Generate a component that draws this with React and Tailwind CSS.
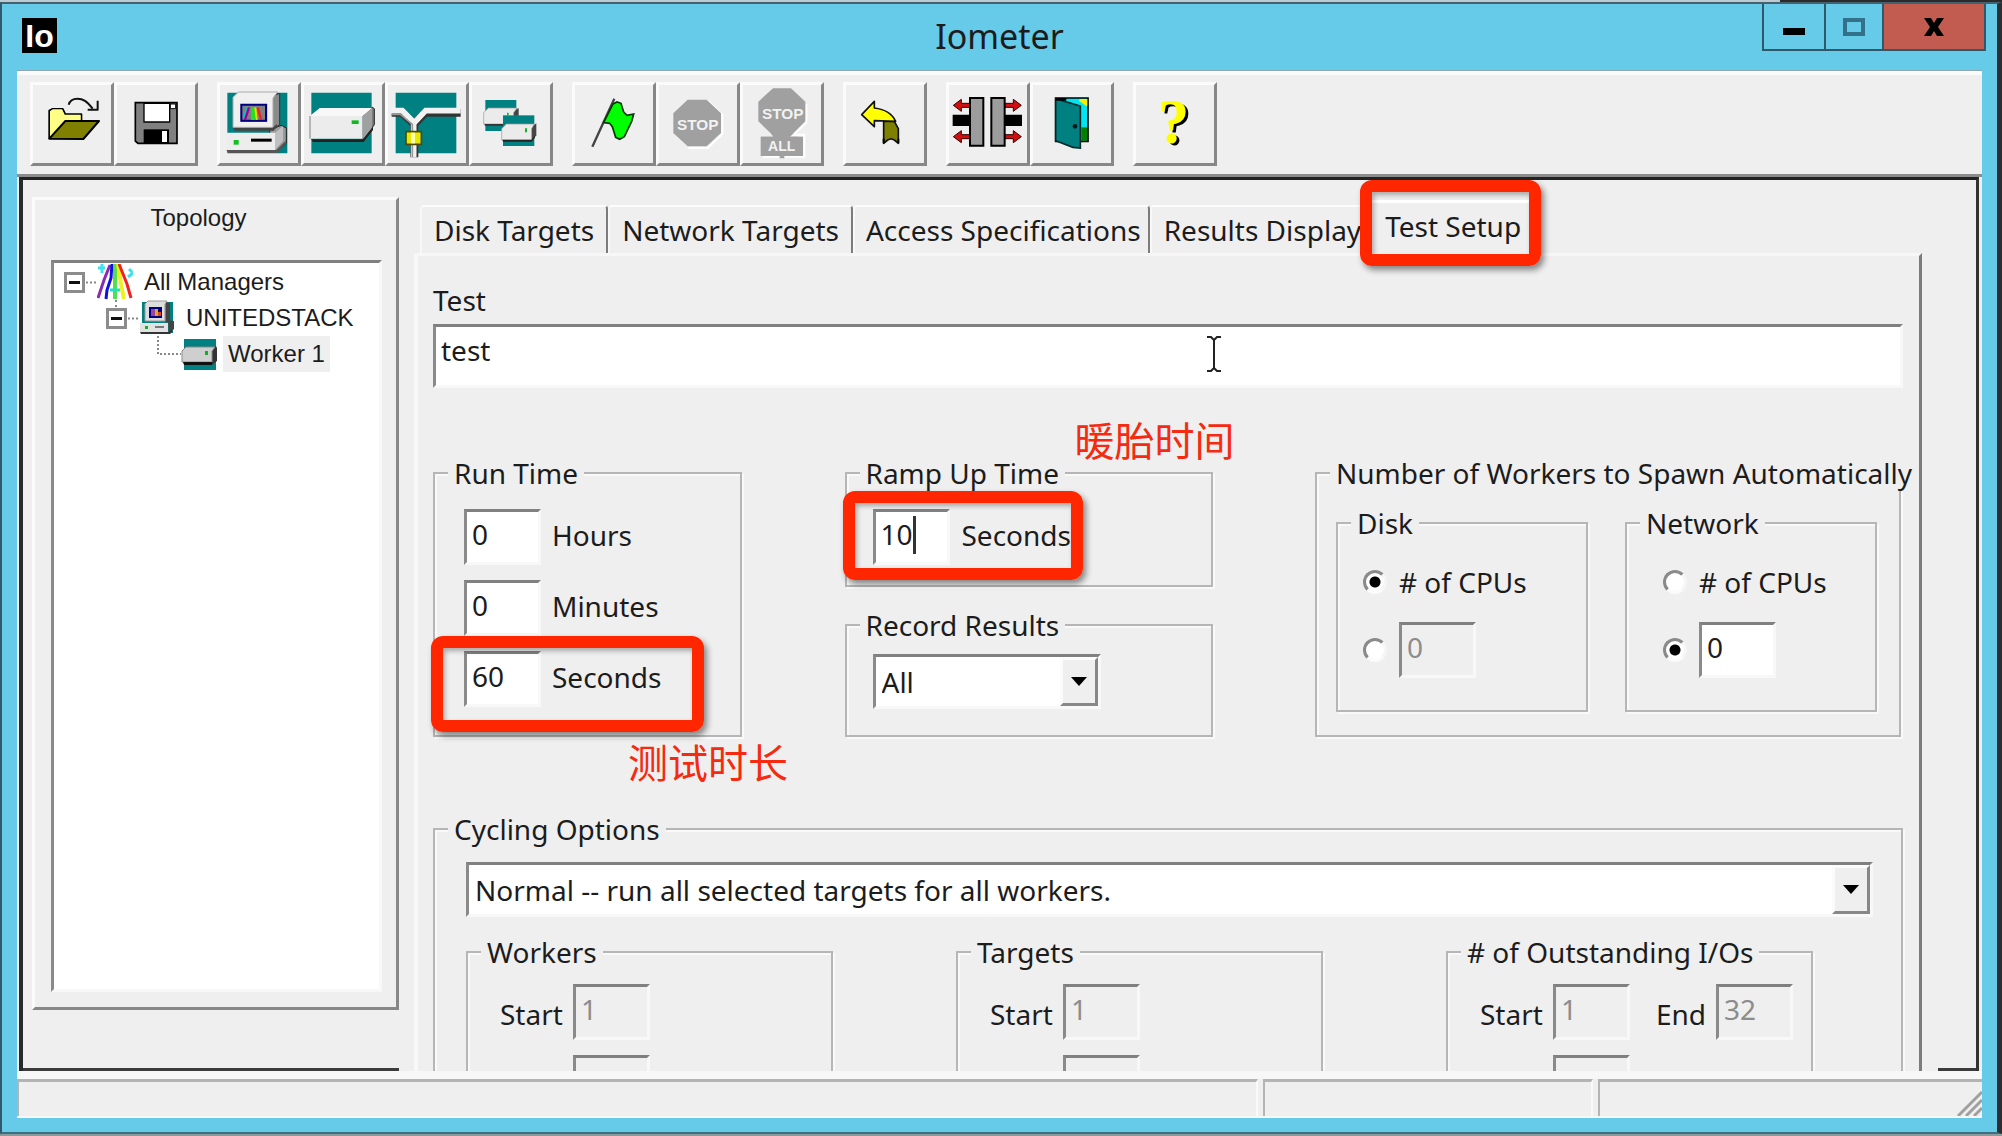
import React from "react";

const SUNKEN =
  "border-[3px] border-t-[#808080] border-l-[#8a8a8a] border-r-[#f8f8f8] border-b-[#f8f8f8]";
const RAISED =
  "border-[3px] border-t-[#fbfbfb] border-l-[#fbfbfb] border-r-[#878787] border-b-[#878787]";

/* ---------- toolbar drawings ---------- */

function OpenIcon() {
  return (
    <g strokeLinejoin="round">
      <path d="M58 176V92l10-5h30l8 16h48v20" fill="#ffff80" stroke="#000" strokeWidth="6" />
      <path d="M60 174V94l8-6h28l8 16h48v18h-44z" fill="#ffff86" />
      <path d="M58 176 106 123H207L160 177z" fill="#808000" stroke="#000" strokeWidth="6" />
      <path d="M116 74c4-14 12-18 26-18 18 0 28 8 46 30" fill="none" stroke="#111" strokeWidth="6" />
      <path d="M173 89h30V62" fill="none" stroke="#111" strokeWidth="6" />
    </g>
  );
}

function SaveIcon() {
  return (
    <g>
      <path d="M316 68h125v122H324l-8-7z" fill="#808080" stroke="#000" strokeWidth="5" />
      <path d="M342 70h77v56h-77z" fill="#fff" stroke="#000" strokeWidth="4" />
      <path d="M421 72h16v14h-16z" fill="#fff" stroke="#000" strokeWidth="3" />
      <path d="M341 148h76v42h-76z" fill="#000" />
      <path d="M396 153h15v33h-15z" fill="#fff" />
    </g>
  );
}

function ManagerIcon() {
  return (
    <g>
      <path d="M595 38h180v182H595z" fill="#008080" />
      <path d="M722 150l34-14 16 8v46l-26 24h-20z" fill="#9a9a9a" stroke="#222" strokeWidth="3" />
      <path d="M592 158h146v52H592z" fill="#ededed" />
      <path d="M738 158l24-20v44l-24 28z" fill="#c0c0c0" />
      <path d="M592 210h150l28-28v10l-24 27H598z" fill="#555" />
      <path d="M730 48l22-8v94l-22 16z" fill="#8a8a8a" stroke="#333" strokeWidth="3" />
      <path d="M612 52l16-16h118l-14 18v88H612z" fill="#f0f0f0" stroke="#aaa" strokeWidth="3" />
      <path d="M612 144h118l14-12v8l-10 12H618z" fill="#444" />
      <path d="M635 72h80v54h-80z" fill="#808080" />
      <path d="M637 122V74h74v48z" fill="none" stroke="#000080" strokeWidth="6" />
      <path d="M644 112l12-32" stroke="#00c8d0" strokeWidth="5" />
      <path d="M648 120l12-38" stroke="#a000a0" strokeWidth="7" />
      <path d="M672 120V82" stroke="#20e020" strokeWidth="12" />
      <path d="M683 120l-4-38" stroke="#e0e000" strokeWidth="6" />
      <path d="M696 118l-10-36" stroke="#f02020" strokeWidth="7" />
      <path d="M614 180h15v14h-15z" fill="#10c020" />
      <path d="M666 176h62v9h-62z" fill="#000" />
    </g>
  );
}

function DiskIcon() {
  return (
    <g>
      <path d="M847 38h181v182H847z" fill="#008080" />
      <path d="M1002 106l28-24 6 4v48l-34 48z" fill="#7c7c7c" stroke="#222" strokeWidth="3" />
      <path d="M843 108l30-24h156l-28 24v68H843z" fill="#ececec" />
      <path d="M843 108l30-24h156l-28 24z" fill="#f8f8f8" />
      <path d="M1001 108l28-24v60l-28 34z" fill="#a0a0a0" />
      <path d="M843 108v68" stroke="#999" strokeWidth="4" />
      <path d="M846 178h156l30-38v10l-28 36H852z" fill="#222" />
      <path d="M968 121h21v11h-21z" fill="#10b820" />
    </g>
  );
}

function NetworkIcon() {
  return (
    <g fill="none">
      <path d="M1100 38h182v182h-182z" fill="#008080" />
      <path d="M1088 98h30l38 34 34-34h105M1156 128v104" stroke="#333" strokeWidth="24" />
      <path d="M1086 92h34l36 36 34-36h105M1154 124v108" stroke="#f2f2f2" strokeWidth="17" />
      <path d="M1088 103h26l36 30v98" stroke="#999" strokeWidth="5" />
      <path d="M1131 155h46v38h-46z" fill="#e8e800" stroke="#504800" strokeWidth="5" />
      <path d="M1152 158v32" stroke="#ffffb0" strokeWidth="12" />
    </g>
  );
}

function TargetsIcon() {
  return (
    <g>
      <path d="M1369 60h93v93h-93z" fill="#008080" />
      <path d="M1455 92l14-8v36l-14 16z" fill="#444" />
      <path d="M1364 98l14-14h86l-10 14v34h-90z" fill="#ebebeb" stroke="#999" strokeWidth="2" />
      <path d="M1366 132h64v5h-62z" fill="#333" />
      <path d="M1434 98h5v8h-5z" fill="#10b820" />
      <path d="M1422 106h94v92h-94z" fill="#008080" />
      <path d="M1508 140l14-10v36l-14 18z" fill="#444" />
      <path d="M1418 146l14-14h84l-8 14v34h-90z" fill="#ebebeb" stroke="#999" strokeWidth="2" />
      <path d="M1420 179h88l10-12v6l-10 12h-86z" fill="#222" />
      <path d="M1488 145h6v12h-6z" fill="#10b820" />
    </g>
  );
}

function StartIcon() {
  return (
    <g>
      <path d="M70 200 136 56" stroke="#444" strokeWidth="7" />
      <path
        d="M132 72l12-6 12 4 8 26 10 10 20-4-6 22-22 46-14 8-12-6-10-32-8-10-18-2z"
        fill="#00ff00"
        stroke="#063806"
        strokeWidth="5"
      />
    </g>
  );
}

function StopIcon() {
  return (
    <g fontFamily="Liberation Sans, Arial, sans-serif">
      <path d="M362 64h56l42 40v58l-44 42h-58" fill="none" stroke="#fff" strokeWidth="6" />
      <path d="M356 59h57l43 41v59l-43 40h-57l-43-40v-59z" fill="#a0a0a0" />
      <text x="386" y="150" textAnchor="middle" fontSize="46" fontWeight="700" fill="#f2f2f2">STOP</text>
    </g>
  );
}

function StopAllIcon() {
  return (
    <g fontFamily="Liberation Sans, Arial, sans-serif">
      <path d="M712 72v56l-38 36h32v66H582" fill="none" stroke="#fff" strokeWidth="6" />
      <path d="M612 25h54l43 40v59l-36 36-12 10h29v58h-44v7h-14v-7h-57v-58h38l-8-10-37-36V65z" fill="#a0a0a0" />
      <path d="M606 160h68l-12 10h40v58h-126v-58h42z" fill="#a0a0a0" />
      <text x="641" y="117" textAnchor="middle" fontSize="46" fontWeight="700" fill="#f2f2f2">STOP</text>
      <text x="638" y="214" textAnchor="middle" fontSize="42" fontWeight="700" fill="#f2f2f2">ALL</text>
    </g>
  );
}

function UndoIcon() {
  return (
    <g strokeLinejoin="round">
      <path d="M944 124h32l12 22v44l-12-10-10-4-10 4-12 10z" fill="#808000" stroke="#111" strokeWidth="5" />
      <path d="M944 190v-14M988 190v-14" stroke="#000" strokeWidth="6" />
      <path d="M878 104l38-40v20c32 4 52 14 64 40l-64-2v18z" fill="#ffff00" stroke="#111" strokeWidth="5" />
    </g>
  );
}

function DisconnectIcon() {
  return (
    <g>
      <path d="M1148 104h54v34h-54zM1302 104h54v34h-54z" fill="#000" />
      <path d="M1150 76l24-18v12h26v12h-26v12zM1354 76l-24-18v12h-26v12h26v12z" fill="#d01010" stroke="#300" strokeWidth="3" />
      <path d="M1150 170l24-18v12h26v12h-26v12zM1354 170l-24-18v12h-26v12h26v12z" fill="#d01010" stroke="#300" strokeWidth="3" />
      <path d="M1200 54h40v143h-40zM1264 54h40v143h-40z" fill="#9c9c9c" stroke="#000" strokeWidth="6" />
    </g>
  );
}

function ExitIcon() {
  return (
    <g>
      <path d="M1457 54h97v130h-97z" fill="#00e5f0" stroke="#000" strokeWidth="5" />
      <path d="M1528 57h24v23l-24-16z" fill="#f8f000" />
      <path d="M1534 142h17v40h-17z" fill="#008000" />
      <path d="M1457 56l74 22v126l-22-2-52-20z" fill="#008080" stroke="#002a2a" strokeWidth="5" />
      <path d="M1457 54h32v8h-32z" fill="#000" />
      <circle cx="1515" cy="139" r="7" fill="#001818" />
    </g>
  );
}

function HelpIcon() {
  return (
    <g fontFamily="Liberation Serif, Times New Roman, serif" fontWeight="700" fontSize="188" textAnchor="middle">
      <text x="1819" y="194" fill="#000">?</text>
      <text x="1811" y="190" fill="#ffff00">?</text>
    </g>
  );
}

const TOOL_GROUPS = [
  [
    { label: "Open", box: "9 15 234 234", Icon: OpenIcon },
    { label: "Save", box: "261 15 234 234", Icon: SaveIcon },
  ],
  [
    { label: "Start manager", box: "573 15 234 234", Icon: ManagerIcon },
    { label: "Start disk worker", box: "825 15 234 234", Icon: DiskIcon },
    { label: "Start network worker", box: "1077 15 234 234", Icon: NetworkIcon },
    { label: "Duplicate worker", box: "1329 15 234 234", Icon: TargetsIcon },
  ],
  [
    { label: "Start tests", box: "18 15 234 234", Icon: StartIcon },
    { label: "Stop test", box: "270 15 234 234", Icon: StopIcon, disabled: true },
    { label: "Stop all tests", box: "522 15 234 234", Icon: StopAllIcon, disabled: true },
  ],
  [{ label: "Reset workers", box: "831 15 234 234", Icon: UndoIcon }],
  [
    { label: "Disconnect", box: "1137 15 234 234", Icon: DisconnectIcon },
    { label: "Exit", box: "1389 15 234 234", Icon: ExitIcon },
  ],
  [{ label: "About", box: "1698 15 234 234", Icon: HelpIcon }],
];

/* ---------- tree drawings ---------- */

function Expander({ child }) {
  return (
    <svg width="33" height="36" viewBox="0 0 33 36" fill="none">
      {child && <path d="M10 0v8" stroke="#888" strokeWidth="2" strokeDasharray="2 3" />}
      <rect x="1.5" y="9.5" width="18" height="18" fill="#fff" stroke="#8c8c8c" strokeWidth="3" />
      <path d="M5 18.5h11" stroke="#111" strokeWidth="3" />
      <path d="M22 18.5h11" stroke="#888" strokeWidth="2" strokeDasharray="2 2" />
    </svg>
  );
}

function Elbow() {
  return (
    <svg width="33" height="36" viewBox="0 0 33 36" fill="none">
      <path d="M10 0v18h23" stroke="#888" strokeWidth="2" strokeDasharray="2 2" />
    </svg>
  );
}

function RootGlyph() {
  return (
    <svg width="36" height="36" viewBox="0 0 36 36" fill="none" strokeWidth="3">
      <path d="M1 4h7M5 0v9" stroke="#40e0f0" />
      <path d="M32 5l4 4-5 4" stroke="#40e0f0" />
      <path d="M13 1 7 16 1 34" stroke="#8a2ab0" />
      <path d="M15 0l-1 14-4 12-1 9" stroke="#1010e0" />
      <path d="M18 0v35" stroke="#50e050" strokeWidth="4" />
      <path d="M13 26h10" stroke="#20e0c0" />
      <path d="M21 0l3 20 3 15" stroke="#f0f020" strokeWidth="4" />
      <path d="M22 0l8 20 4 14" stroke="#f02020" />
    </svg>
  );
}

function HostGlyph() {
  return (
    <svg width="36" height="36" viewBox="0 0 36 36">
      <path d="M3 2h31v31H3z" fill="#008080" />
      <path d="M27 2l4 1v17l-4 3zM29 20l6 1v8l-5 5z" fill="#444" />
      <path d="M6 4l3-3h19l-2 3v17H6z" fill="#dedede" stroke="#999" />
      <path d="M10 7h13v11H10z" fill="#000080" />
      <path d="M12 9h4v7h-4z" fill="#a040a0" />
      <path d="M16 9h3v7h-3z" fill="#d0b020" />
      <path d="M19 12h3v4h-3z" fill="#e04020" />
      <path d="M1 23h28v9H1z" fill="#e2e2e2" />
      <path d="M1 32h29l3-3v3l-2 2H2z" fill="#333" />
      <path d="M6 26h3v3H6z" fill="#10b020" />
      <path d="M16 26h9v2h-9z" fill="#777" />
    </svg>
  );
}

function WorkerGlyph() {
  return (
    <svg width="36" height="36" viewBox="0 0 36 36">
      <path d="M3 3h32v31H3z" fill="#008080" />
      <path d="M30 13l5-3 1 2v13l-5 4z" fill="#333" />
      <path d="M1 15l4-4h29l-3 4v11H1z" fill="#cfcfcf" stroke="#8a8a8a" />
      <path d="M2 26h29v3H3z" fill="#111" />
      <path d="M24 15h3v4h-3z" fill="#10b020" />
    </svg>
  );
}

/* ---------- form parts ---------- */

function Group({ title, className = "", inner = "", children }) {
  return (
    <fieldset
      className={`min-w-0 border-2 border-[#b6b6b6] shadow-[2px_2px_0_#f9f9f9,inset_2px_2px_0_#f9f9f9] ${className}`}
    >
      <legend className="ml-[13px] bg-[#efefef] px-[6px] whitespace-nowrap">{title}</legend>
      <div className={inner}>{children}</div>
    </fieldset>
  );
}

function Field({ id, value, disabled, label }) {
  return (
    <input
      id={id}
      aria-label={label}
      type="text"
      defaultValue={value}
      disabled={disabled}
      className={`h-[56px] w-[77px] shrink-0 pb-[6px] pl-[5px] outline-none ${SUNKEN} ${
        disabled ? "bg-[#efefef] text-[#8c8c8c]" : "bg-white"
      }`}
    />
  );
}

function Combo({ label, options, className = "" }) {
  return (
    <div className={`relative h-[55px] bg-white ${SUNKEN} ${className}`}>
      <select aria-label={label} className="size-full appearance-none bg-white pl-[6px] outline-none">
        {options.map((o) => (
          <option key={o}>{o}</option>
        ))}
      </select>
      <span
        className={`pointer-events-none absolute top-0 right-0 bottom-0 flex w-[38px] items-center justify-center bg-[#efefef] ${RAISED}`}
      >
        <svg width="16" height="9" viewBox="0 0 16 9">
          <path d="M0 0h16L8 9z" />
        </svg>
      </span>
    </div>
  );
}

function Highlight({ className }) {
  return (
    <span
      aria-hidden="true"
      className={`pointer-events-none absolute z-10 rounded-[12px] border-[12px] border-[#ff2600] shadow-[3px_4px_6px_rgba(0,0,0,0.45),inset_2px_3px_5px_rgba(0,0,0,0.3)] ${className}`}
    />
  );
}

function Note({ className, children }) {
  return (
    <span
      className={`pointer-events-none absolute z-10 font-['Noto_Sans_CJK_SC',sans-serif] text-[40px] leading-[48px] whitespace-nowrap text-[#f52a10] ${className}`}
    >
      {children}
    </span>
  );
}

function Radio({ id, name, checked, label }) {
  return (
    <input
      id={id}
      type="radio"
      name={name}
      aria-label={label}
      defaultChecked={checked}
      className="size-6 shrink-0 appearance-none rounded-full border-[3px] border-t-[#8a8a8a] border-r-[#f6f6f6] border-b-[#fbfbfb] border-l-[#8a8a8a] bg-white checked:bg-[radial-gradient(circle,#000_5px,#fff_6px)]"
    />
  );
}

function SpawnGroup({ title, name, useCount, disabled, inner }) {
  return (
    <Group title={title} className="h-[207px] w-[252px]" inner={inner}>
      <div className="flex items-center gap-[12px] pt-[23px]">
        <Radio id={`${name}-cpus`} name={name} checked={!useCount} />
        <label htmlFor={`${name}-cpus`}># of CPUs</label>
      </div>
      <div className="mt-[22px] flex items-center gap-[12px]">
        <Radio name={name} checked={useCount} label={`${title} worker count`} />
        <Field label={`${title} workers`} value="0" disabled={disabled} />
      </div>
    </Group>
  );
}

function RangeGroup({ title, id, end }) {
  return (
    <Group title={title} className="h-[260px] w-[367px]" inner="pl-[32px]">
      <div className="flex items-center gap-[10px] pt-[14px]">
        <label htmlFor={`${id}-start`} className="pt-1">Start</label>
        <Field id={`${id}-start`} value="1" disabled />
        {end && (
          <>
            <label htmlFor={`${id}-end`} className="ml-[16px] pt-1">End</label>
            <Field id={`${id}-end`} value={end} disabled />
          </>
        )}
      </div>
      <div className="mt-[15px] ml-[73px]">
        <Field label={`${title} step`} value="" disabled />
      </div>
    </Group>
  );
}

const TABS = [
  { title: "Disk Targets", pad: "px-[12px]" },
  { title: "Network Targets", pad: "px-[12px]" },
  { title: "Access Specifications", pad: "pl-[11px] pr-[7px]" },
  { title: "Results Display", pad: "pl-[12px] pr-0" },
];

function TitleBar() {
  return (
    <header className="grid h-[67px] grid-cols-[1fr_auto_1fr] bg-[#66cae9]">
      <div className="pt-[14px] pl-5">
        <div className="flex h-[35px] w-[35px] items-center justify-center bg-black font-['Liberation_Sans',Arial,sans-serif] text-[32px] leading-none font-bold text-white">
          Io
        </div>
      </div>
      <h1 className="self-center pb-1 text-[34px] leading-[46px]">Iometer</h1>
      <div className="mr-[11px] flex h-[47px] justify-self-end border-2 border-t-0 border-[#2f5868]">
        <button aria-label="Minimize" className="flex w-[62px] items-center justify-center border-r-2 border-[#2f5868]">
          <svg width="22" height="24" viewBox="0 0 22 24">
            <path d="M0 13h22v7H0z" />
          </svg>
        </button>
        <button aria-label="Maximize" className="flex w-[58px] items-center justify-center border-r-2 border-[#2f5868]">
          <svg width="22" height="18" viewBox="0 0 22 18" fill="none">
            <path d="M2 2h18v14H2z" stroke="#33708a" strokeWidth="4" />
          </svg>
        </button>
        <button aria-label="Close" className="flex w-[100px] items-center justify-center bg-[#c25b50]">
          <svg width="20" height="18" viewBox="0 0 20 18">
            <path d="M0 0h7l3 5 3-5h7l-6 9 6 9h-7l-3-5-3 5H0l6-9z" />
          </svg>
        </button>
      </div>
    </header>
  );
}

function Toolbar() {
  return (
    <div
      role="toolbar"
      className="flex h-[106px] shrink-0 gap-[19px] border-t-4 border-b-3 border-t-[#fbfbfb] border-b-[#8c8c8c] pt-[7px] pl-[13px]"
    >
      {TOOL_GROUPS.map((group) => (
        <div key={group[0].label} className="flex">
          {group.map(({ label, box, Icon, disabled }) => (
            <button key={label} aria-label={label} disabled={disabled} className={`size-[84px] ${RAISED}`}>
              <svg width="78" height="78" viewBox={box}>
                <Icon />
              </svg>
            </button>
          ))}
        </div>
      ))}
    </div>
  );
}

function TreeRow({ lead, glyph, text, indent, selected }) {
  return (
    <li className={`flex h-[36px] items-center ${indent}`}>
      {lead}
      {glyph}
      <span className={`ml-[6px] px-[5px] whitespace-nowrap ${selected ? "bg-[#efefef]" : ""}`}>{text}</span>
    </li>
  );
}

function Topology() {
  return (
    <aside className="flex w-[376px] shrink-0 flex-col border-b-3 border-[#3c3c3c] pt-[17px] pl-[9px] font-['Liberation_Sans',Arial,sans-serif] text-[24px] leading-[36px]">
      <section className={`mb-[58px] flex flex-1 flex-col pr-[14px] pb-[15px] pl-[16px] ${RAISED}`}>
        <h2 className="h-[60px] pr-[36px] text-center">Topology</h2>
        <ul className={`flex-1 bg-white pt-px pl-[10px] ${SUNKEN}`}>
          <TreeRow
            indent="pl-0"
            lead={<button aria-label="Collapse All Managers"><Expander /></button>}
            glyph={<RootGlyph />}
            text="All Managers"
          />
          <TreeRow
            indent="pl-[42px]"
            lead={<button aria-label="Collapse UNITEDSTACK"><Expander child /></button>}
            glyph={<HostGlyph />}
            text="UNITEDSTACK"
          />
          <TreeRow indent="pl-[84px]" lead={<Elbow />} glyph={<WorkerGlyph />} text="Worker 1" selected />
        </ul>
      </section>
    </aside>
  );
}

function TestSetup() {
  return (
    <div className="min-h-0 flex-1 overflow-hidden border-t-3 border-r-3 border-l-4 border-t-[#f7f7f7] border-r-[#7c7c7c] border-l-[#f8f8f8] pt-[26px] pr-[16px] pl-[15px]">
      <label htmlFor="test-name" className="block">Test</label>
      <div className="relative mt-[6px]">
        <input
          id="test-name"
          type="text"
          defaultValue="test"
          className={`h-[64px] w-full bg-white pb-3 pl-[5px] outline-none ${SUNKEN}`}
        />
        <svg className="pointer-events-none absolute top-[11px] left-[773px]" width="16" height="38" viewBox="0 0 16 38" fill="none" stroke="#222" strokeWidth="2">
          <path d="M1 2h4l3 3 3-3h4M8 5v28M1 36h4l3-3 3 3h4" />
        </svg>
      </div>

      <div className="mt-[67px] flex justify-between pr-[2px]">
        <Group title="Run Time" className="w-[309px]" inner="pb-[28px] pl-[29px]">
          <div className="flex flex-col gap-[15px] pt-[18px]">
            <div className="flex items-center gap-[11px]">
              <Field id="hours" value="0" />
              <label htmlFor="hours" className="pb-1">Hours</label>
            </div>
            <div className="flex items-center gap-[11px]">
              <Field id="minutes" value="0" />
              <label htmlFor="minutes" className="pb-1">Minutes</label>
            </div>
            <div className="relative flex items-center gap-[11px]">
              <Field id="seconds" value="60" />
              <label htmlFor="seconds" className="pb-1">Seconds</label>
              <Highlight className="-top-[15px] -left-[33px] h-[96px] w-[273px]" />
              <Note className="top-[86px] left-[164px]">测试时长</Note>
            </div>
          </div>
        </Group>

        <div className="flex w-[368px] flex-col gap-[20px]">
          <Group title="Ramp Up Time" className="h-[132px]" inner="pl-[26px]">
            <div className="relative mt-[18px] flex items-center gap-[12px]">
              <Field id="ramp" value="10" />
              <span aria-hidden="true" className="absolute top-[7px] left-[40px] h-[38px] w-[3px] bg-[#333]" />
              <label htmlFor="ramp" className="pb-1">Seconds</label>
              <Highlight className="-top-[18px] -left-[30px] h-[89px] w-[240px]" />
              <Note className="-top-[94px] left-[202px]">暖胎时间</Note>
            </div>
          </Group>
          <Group title="Record Results" className="flex-1" inner="pl-[26px] pt-[11px]">
            <Combo label="Record Results" options={["All", "None"]} className="w-[228px]" />
          </Group>
        </div>

        <Group title="Number of Workers to Spawn Automatically" className="w-[586px]" inner="pt-[14px] pl-[19px]">
          <div className="flex gap-[37px]">
            <SpawnGroup title="Disk" name="disk" disabled inner="pl-[25px]" />
            <SpawnGroup title="Network" name="network" useCount inner="pl-[36px]" />
          </div>
        </Group>
      </div>

      <div className="mt-[74px]">
        <Group title="Cycling Options" inner="pt-[15px] pr-[28px] pl-[31px]">
          <Combo
            label="Cycling Options"
            options={["Normal -- run all selected targets for all workers."]}
          />
          <div className="mt-[17px] flex justify-between pr-[60px]">
            <RangeGroup title="Workers" id="workers" />
            <RangeGroup title="Targets" id="targets" />
            <RangeGroup title="# of Outstanding I/Os" id="ios" end="32" />
          </div>
        </Group>
      </div>
    </div>
  );
}

export default function App() {
  return (
    <div className="flex h-screen flex-col overflow-hidden bg-[#8b9a9c] font-['Noto_Sans','Noto_Sans_CJK_SC',sans-serif] text-[28px] leading-[36px] text-[#1c1c1c]">
      <div className="flex h-[2px] shrink-0 bg-[#bccad2]">
        <div className="ml-auto w-[222px] bg-[#2b2b2b]" />
      </div>
      <div className="mb-[2px] flex min-h-0 flex-1 flex-col border-t-2 border-r-[5px] border-b-2 border-l-2 border-t-[#45606e] border-r-[#2b2f33] border-b-[#3f6e80] border-l-[#2f5a6e] bg-[#66cae9]">
        <TitleBar />
        <div className="mr-[15px] mb-[14px] ml-[15px] flex min-h-0 flex-1 flex-col bg-[#efefef] shadow-[0_-1px_0_#8fa6b0]">
          <Toolbar />
          <main className="mr-[3px] ml-[2px] flex min-h-0 flex-1 overflow-hidden border-t-3 border-r-3 border-l-4 border-t-[#222] border-r-[#333] border-l-[#2a2a2a]">
            <Topology />
            <section className="flex min-w-0 flex-1 flex-col pr-[16px] pl-[15px]">
              <div role="tablist" className="flex h-[73px] shrink-0 items-end pl-[6px]">
                {TABS.map(({ title, pad }) => (
                  <button
                    key={title}
                    role="tab"
                    aria-selected="false"
                    className={`h-[48px] rounded-t-[4px] border-2 border-b-0 border-t-[#fcfcfc] border-r-[#7c7c7c] border-l-[#f8f8f8] whitespace-nowrap ${pad}`}
                  >
                    {title}
                  </button>
                ))}
                <button
                  role="tab"
                  aria-selected="true"
                  className="relative h-[53px] border-t-3 border-[#fff] pr-[15px] pb-[4px] pl-[22px] whitespace-nowrap"
                >
                  Test Setup
                  <Highlight className="-top-[23px] -left-[3px] h-[86px] w-[181px]" />
                </button>
              </div>
              <TestSetup />
            </section>
            <div className="w-[38px] shrink-0 border-b-3 border-[#3c3c3c]" />
          </main>
          <footer className="flex h-[47px] shrink-0 gap-[5px] border-t-8 border-b-2 border-[#f7f7f7]">
            <div className="flex-1 border-t-3 border-r-2 border-l-2 border-t-[#b4b4b4] border-r-[#f9f9f9] border-l-[#b4b4b4]" />
            <div className="w-[330px] border-t-3 border-r-2 border-l-2 border-t-[#b4b4b4] border-r-[#f9f9f9] border-l-[#b4b4b4]" />
            <div className="flex w-[384px] items-end justify-end border-t-3 border-l-2 border-[#b4b4b4]">
              <svg width="26" height="26" viewBox="0 0 26 26" stroke="#a0a0a0" strokeWidth="3">
                <path d="M2 26 26 2M10 26 26 10M18 26l8-8" />
              </svg>
            </div>
          </footer>
        </div>
      </div>
    </div>
  );
}
